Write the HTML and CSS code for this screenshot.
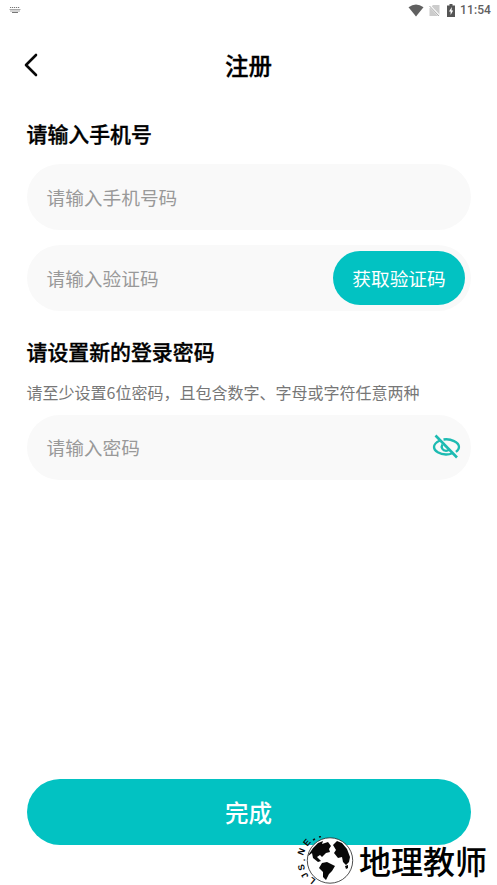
FILE: index.html
```html
<!DOCTYPE html>
<html lang="zh-CN">
<head>
<meta charset="utf-8">
<title>注册</title>
<link rel="stylesheet" href="styles.css">
</head>
<body>
<main class="screen">
  <div class="status">
    <svg class="keyboard" width="12" height="8" viewBox="0 0 12 8"><path d="M1 1.5h10" stroke="#777" stroke-width="1" stroke-dasharray="1.2 .8"/><path d="M.5 3.5h11M1 5h10" stroke="#aaa" stroke-width="1.2"/><path d="M3 6.5h6" stroke="#777"/></svg>
    <div class="status-right">
      <svg width="16" height="13" viewBox="0 0 16 13"><path d="M.5 3.2Q8-2.300 15.500 3.200L8 12.500Z" fill="#606060"/></svg>
      <svg width="11" height="13" viewBox="0 0 11 13"><path d="M4 1h6.500v11H.5V4.500z" fill="#ccc"/><path d="M.5 1.500 10.500 12" stroke="#fff" stroke-width="2"/><path d="M.5 2 10 12" stroke="#aaa"/></svg>
      <svg width="8" height="13" viewBox="0 0 8 13"><path d="M2.500 0h3v1.500H8V13H0V1.500h2.500z" fill="#555"/><path d="M4.800 3 2 7.600h1.600V11L6.200 6.500H4.600z" fill="#fff"/></svg>
      <span class="time">11:54</span>
    </div>
  </div>
  <header class="nav">
    <svg class="back" width="14" height="24" viewBox="0 0 14 24"><path d="M12 2 2 12l10 10" fill="none" stroke="#080808" stroke-width="2.6" stroke-linecap="round" stroke-linejoin="round"/></svg>
    <h1>注册</h1>
  </header>
  <section class="form">
    <h2>请输入手机号</h2>
    <div class="field"><span>请输入手机号码</span></div>
    <div class="field code"><span>请输入验证码</span><button class="get-code">获取验证码</button></div>
    <h2 class="second">请设置新的登录密码</h2>
    <p class="hint">请至少设置6位密码，且包含数字、字母或字符任意两种</p>
    <div class="field password"><span>请输入密码</span>
      <svg width="30" height="28" viewBox="0 0 30 28" fill="none" stroke="#1dbbb2" stroke-width="2.3"><path d="M9 7.500C5.700 9 3 11.500 3 14c0 4.200 6 7.500 12 7.500 2.500 0 4.500-.5 6.300-1.300M12.500 6.500C20 5.300 28 9.500 28 14c0 1.800-1.200 3.500-3.100 4.900"/><path d="M11.500 11.500c-2 3 .2 6.300 3.500 6.300 1.200 0 2.400-.5 3.200-1.300"/><path d="m4.500 2.500 21.500 22" stroke-width="2.6"/></svg>
    </div>
  </section>
  <button class="done">完成</button>
  <div class="watermark">
    <svg width="64" height="50" viewBox="0 0 64 50">
      <circle cx="36" cy="24.500" r="22.7" fill="#fff" stroke="#222" stroke-width=".8"/>
      <path d="M15 18 19 12l5-5 5-2-1 3 6-2 3 4-2 3 1 3-4 1-4 4-2-2-3 2 4 4-3 1-5-4-1-5-4 3zM28 27l5-1 4 2 4 2-3 5-3 3-3 6-3-3v-5l-4-4zM39 9l4-4 5 2 5 6 3 8-1 5-3 3-3-3-1-5-4 1-4-5 2-3zM51 30l3-1v3l-2 1z" fill="#080808"/>
      <path d="M19 4l2-1M25 1l2-.5" stroke="#111" stroke-width="1.6"/>
      <g class="letters"><text transform="translate(13 6.500) rotate(-50)">E</text><text transform="translate(7.500 15.500) rotate(-68)">N</text><text transform="translate(8 24) rotate(-88)">.</text><text transform="translate(7.500 31.500) rotate(-102)">S</text><text transform="translate(11 39.500) rotate(-120)">J</text><text transform="translate(18 44.500) rotate(-140)">L</text></g>
    </svg>
    <span class="brand">地理教师</span>
  </div>
</main>
</body>
</html>
```
FILE: styles.css
```css
* { box-sizing: border-box; }
body { margin: 0; background: #fff; font-family: "Noto Sans CJK SC", sans-serif; color: #000; }
.screen { position: relative; display: flex; flex-direction: column; width: 497px; height: 885px; overflow: hidden; }
.status { display: flex; justify-content: space-between; align-items: center; height: 20px; padding: 0 6px 0 9px; }
.status-right { display: flex; align-items: center; gap: 5px; }
.status-right svg:nth-child(3) { margin-left: 2px; }
.time { font: 500 12px/20px Roboto, sans-serif; color: #606060; letter-spacing: .1px; }
.nav { display: grid; grid-template-columns: 50px 1fr 50px; align-items: center; height: 90px; padding: 0 24px; }
h1, h2, p { margin: 0; }
h1 { text-align: center; font-size: 23.5px; line-height: 34px; font-weight: 500; -webkit-text-stroke: .3px; }
.form { padding: 0 26.5px; }
h2 { font-size: 20.9px; line-height: 30px; font-weight: 500; margin: 8px 0 16px; -webkit-text-stroke: .35px; }
.field { display: flex; align-items: center; justify-content: space-between; height: 66px; padding: 0 5.5px 0 20px; border-radius: 33px; background: #f9f9f9; color: #999; font-size: 18.7px; }
.field span { padding-bottom: 2px; }
.code { margin-top: 15px; }
button { border: 0; padding: 0; background: #02c2c2; color: #fff; font-family: inherit; }
.get-code { width: 132px; height: 54px; padding-bottom: 2px; border-radius: 27px; font-size: 18.7px; }
.second { margin: 25px 0 14px; }
.hint { font-size: 16px; line-height: 24px; margin-bottom: 11px; color: #777; white-space: nowrap; }
.password { padding-right: 10px; height: 65px; }
.password svg { margin-top: -1px; }
.done { height: 66px; margin: auto 26.5px 40px; padding-bottom: 1px; border-radius: 33px; font-size: 23.5px; font-weight: 500; }
.watermark { position: absolute; left: 294px; top: 836px; display: flex; align-items: center; }
.brand { font-size: 32px; line-height: 46px; font-weight: 500; color: #000; margin: 0 0 2px 1px; white-space: nowrap; }
.letters { font: bold 9px "Liberation Sans", sans-serif; fill: #080808; text-anchor: middle; }
.letters text { dominant-baseline: central; }
```
